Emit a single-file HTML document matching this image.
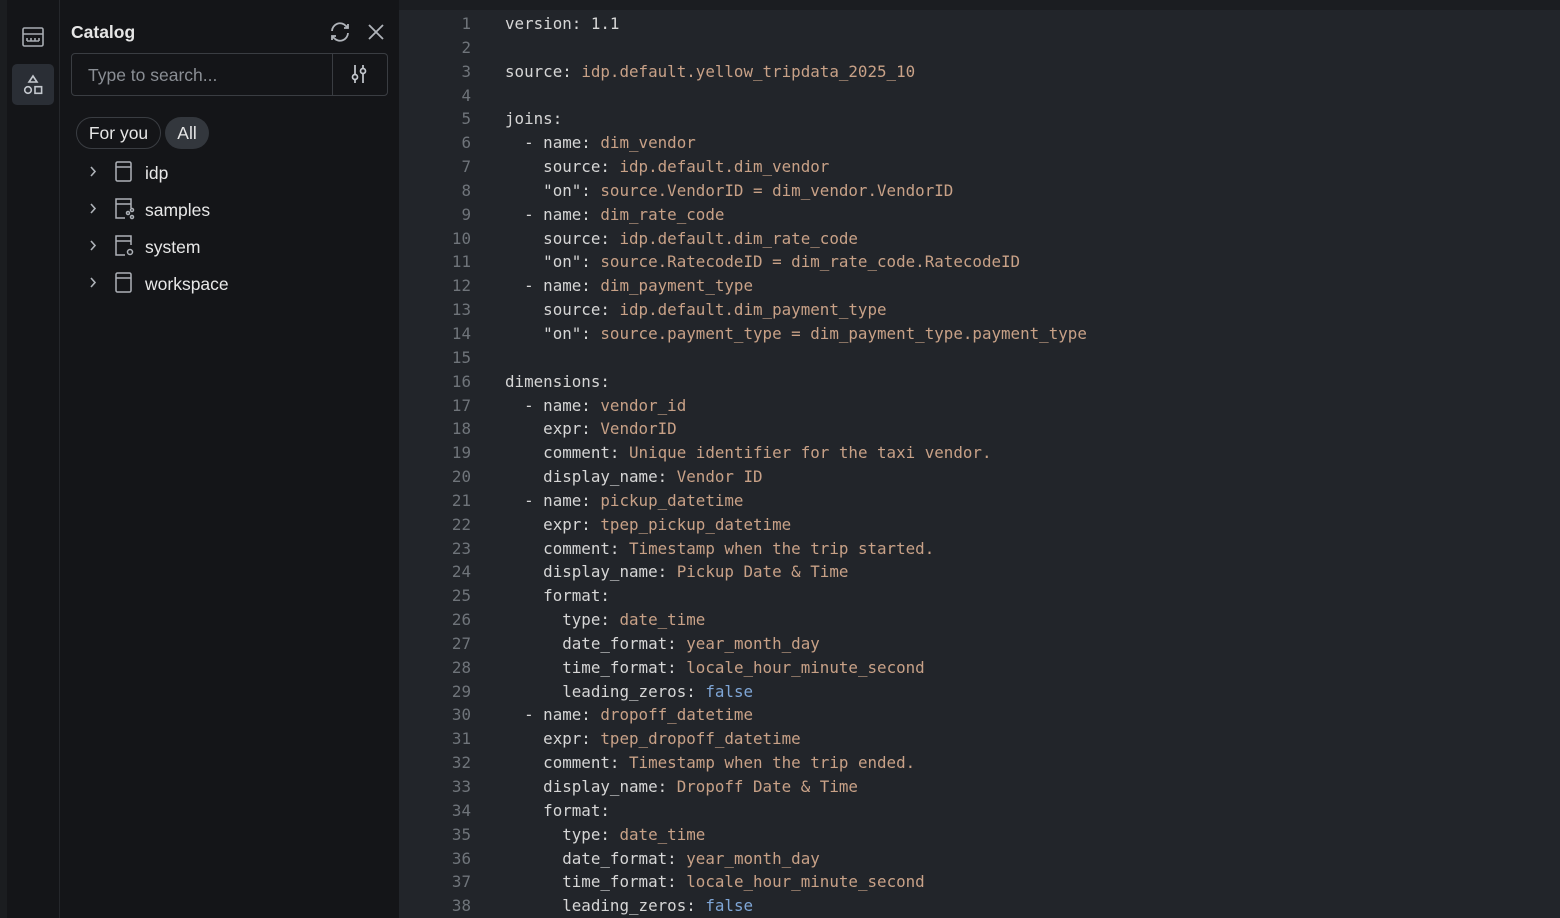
<!DOCTYPE html>
<html><head><meta charset="utf-8"><style>
*{margin:0;padding:0;box-sizing:border-box}
body{width:1560px;height:918px;overflow:hidden;background:#141518;font-family:"Liberation Sans",sans-serif;position:relative}
.rail{position:absolute;left:0;top:0;width:60px;height:918px;background:#141518;border-right:1px solid #25272b}
.rail .edge{position:absolute;left:0;top:0;width:7px;height:918px;background:#1b1d20}
.side{position:absolute;left:61px;top:0;width:338px;height:918px;background:#141518}
.editor{position:absolute;left:399px;top:0;width:1161px;height:918px;background:#22252a}
.editor .top{position:absolute;left:0;top:0;width:100%;height:10px;background:#1b1d21}
.code{position:absolute;top:12px;left:0;font-family:"DejaVu Sans Mono","Liberation Mono",monospace;font-size:15.85px;line-height:23.84px;white-space:pre;color:#d6d6d6}
.ln{position:absolute;left:0;width:72px;text-align:right;color:#6f747a;top:12px;font-family:"DejaVu Sans Mono",monospace;font-size:15.85px;line-height:23.84px;white-space:pre}
.s{color:#c8a187}.b{color:#7fa6d6}
.t{color:#e8e8e8;font-size:17.5px;position:absolute}
</style></head><body>
<div class="rail"><div class="edge"></div>
<svg style="position:absolute;left:22px;top:27px" width="22" height="20" viewBox="0 0 22 20" fill="none" stroke="#a8acb2" stroke-width="1.6"><rect x="1" y="1" width="20" height="18" rx="1.5"/><path d="M1 7h20M5 11v3M9 11v3M13 11v3M17 11v3M5 14h12"/></svg>
<div style="position:absolute;left:12px;top:64px;width:42px;height:41px;background:#2a2e35;border-radius:5px"></div>
<svg style="position:absolute;left:22px;top:74px" width="22" height="22" viewBox="0 0 22 22" fill="none" stroke="#c4c8ce" stroke-width="1.6"><path d="M11 2l4 6H7z"/><circle cx="6" cy="16" r="3.3"/><rect x="13" y="12.7" width="6.6" height="6.6"/></svg>
</div>
<div class="side">
<div style="position:absolute;left:10px;top:22px;font-size:17.5px;font-weight:bold;color:#e6e6e6">Catalog</div>
<svg style="position:absolute;left:268px;top:21px" width="22" height="22" viewBox="0 0 22 22" fill="none" stroke="#b0b4ba" stroke-width="1.8"><path d="M3 10a8 8 0 0 1 14-5l2 2M19 3v4h-4M19 12a8 8 0 0 1-14 5l-2-2M3 19v-4h4"/></svg>
<svg style="position:absolute;left:306px;top:23px" width="18" height="18" viewBox="0 0 18 18" stroke="#b0b4ba" stroke-width="1.8"><path d="M2 2l14 14M16 2L2 16"/></svg>
<div style="position:absolute;left:10px;top:53px;width:317px;height:43px;border:1px solid #3a3d42;border-radius:4px"></div>
<div style="position:absolute;left:271px;top:54px;width:1px;height:41px;background:#3a3d42"></div>
<div style="position:absolute;left:27px;top:65px;font-size:17.5px;color:#8a8e94">Type to search...</div>
<svg style="position:absolute;left:288px;top:63px" width="20" height="22" viewBox="0 0 20 22" fill="none" stroke="#c4c8ce" stroke-width="1.7"><path d="M6 2v9M6 17v3M14 2v3M14 11v9"/><circle cx="6" cy="14" r="2.5"/><circle cx="14" cy="8" r="2.5"/></svg>
<div style="position:absolute;left:15px;top:117px;width:85px;height:32px;border:1px solid #3a3d42;border-radius:16px;color:#e6e6e6;font-size:17.5px;line-height:30px;text-align:center">For you</div>
<div style="position:absolute;left:104px;top:117px;width:44px;height:32px;background:#33373d;border-radius:16px;color:#e6e6e6;font-size:17.5px;line-height:32px;text-align:center">All</div>
<svg style="position:absolute;left:27px;top:164px" width="10" height="135" viewBox="0 0 10 135" fill="none" stroke="#aeb2b8" stroke-width="1.6"><path d="M3 3l4 4.5-4 4.5M3 40l4 4.5-4 4.5M3 77l4 4.5-4 4.5M3 114l4 4.5-4 4.5"/></svg>
<svg style="position:absolute;left:54px;top:161px" width="22" height="135" viewBox="0 0 22 135" fill="none" stroke="#aeb2b8" stroke-width="1.5"><rect x="1" y="1" width="15" height="19" rx="1.5"/><path d="M1 6h15"/><path d="M16 47V38H1v19h9M1 43h15"/><circle cx="13" cy="52" r="1.5"/><circle cx="17" cy="49" r="1.5"/><circle cx="17" cy="56" r="1.5"/><path d="M16 84V75H1v19h9M1 80h15"/><circle cx="15" cy="91" r="2.5"/><rect x="1" y="112" width="15" height="19" rx="1.5"/><path d="M1 117h15"/></svg>
<div class="t" style="left:84px;top:163px">idp</div>
<div class="t" style="left:84px;top:200px">samples</div>
<div class="t" style="left:84px;top:237px">system</div>
<div class="t" style="left:84px;top:274px">workspace</div>
</div>
<div class="editor"><div class="top"></div>
<div class="ln">1
2
3
4
5
6
7
8
9
10
11
12
13
14
15
16
17
18
19
20
21
22
23
24
25
26
27
28
29
30
31
32
33
34
35
36
37
38</div>
<div class="code" style="left:106px">version: 1.1

source: <span class="s">idp.default.yellow_tripdata_2025_10</span>

joins:
  - name: <span class="s">dim_vendor</span>
    source: <span class="s">idp.default.dim_vendor</span>
    "on": <span class="s">source.VendorID = dim_vendor.VendorID</span>
  - name: <span class="s">dim_rate_code</span>
    source: <span class="s">idp.default.dim_rate_code</span>
    "on": <span class="s">source.RatecodeID = dim_rate_code.RatecodeID</span>
  - name: <span class="s">dim_payment_type</span>
    source: <span class="s">idp.default.dim_payment_type</span>
    "on": <span class="s">source.payment_type = dim_payment_type.payment_type</span>

dimensions:
  - name: <span class="s">vendor_id</span>
    expr: <span class="s">VendorID</span>
    comment: <span class="s">Unique identifier for the taxi vendor.</span>
    display_name: <span class="s">Vendor ID</span>
  - name: <span class="s">pickup_datetime</span>
    expr: <span class="s">tpep_pickup_datetime</span>
    comment: <span class="s">Timestamp when the trip started.</span>
    display_name: <span class="s">Pickup Date &amp; Time</span>
    format:
      type: <span class="s">date_time</span>
      date_format: <span class="s">year_month_day</span>
      time_format: <span class="s">locale_hour_minute_second</span>
      leading_zeros: <span class="b">false</span>
  - name: <span class="s">dropoff_datetime</span>
    expr: <span class="s">tpep_dropoff_datetime</span>
    comment: <span class="s">Timestamp when the trip ended.</span>
    display_name: <span class="s">Dropoff Date &amp; Time</span>
    format:
      type: <span class="s">date_time</span>
      date_format: <span class="s">year_month_day</span>
      time_format: <span class="s">locale_hour_minute_second</span>
      leading_zeros: <span class="b">false</span></div>
</div>
</body></html>
